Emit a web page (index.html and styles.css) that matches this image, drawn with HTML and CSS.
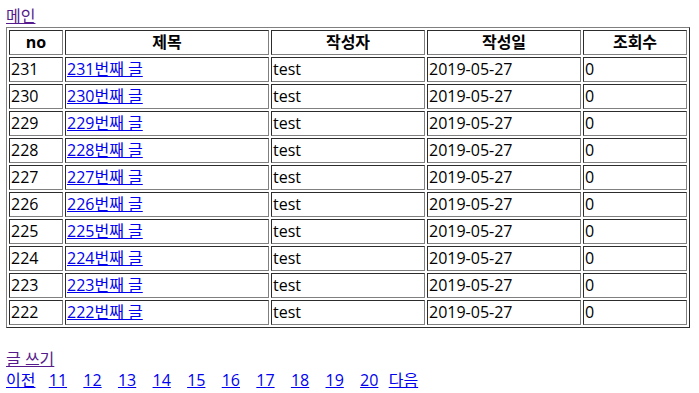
FILE: index.html
```html
<!DOCTYPE html>
<html lang="ko">
<head>
<meta charset="utf-8">
<title>게시판</title>
<link rel="stylesheet" href="styles.css">
</head>
<body>
<div class="top"><a class="visited" href="#">메인</a></div>
<table class="board">
  <thead>
    <tr>
      <th class="c-no">no</th>
      <th class="c-title">제목</th>
      <th class="c-writer">작성자</th>
      <th class="c-date">작성일</th>
      <th class="c-views">조회수</th>
    </tr>
  </thead>
  <tbody>
    <tr><td>231</td><td><a href="#">231번째 글</a></td><td>test</td><td>2019-05-27</td><td>0</td></tr>
    <tr><td>230</td><td><a href="#">230번째 글</a></td><td>test</td><td>2019-05-27</td><td>0</td></tr>
    <tr><td>229</td><td><a href="#">229번째 글</a></td><td>test</td><td>2019-05-27</td><td>0</td></tr>
    <tr><td>228</td><td><a href="#">228번째 글</a></td><td>test</td><td>2019-05-27</td><td>0</td></tr>
    <tr><td>227</td><td><a href="#">227번째 글</a></td><td>test</td><td>2019-05-27</td><td>0</td></tr>
    <tr><td>226</td><td><a href="#">226번째 글</a></td><td>test</td><td>2019-05-27</td><td>0</td></tr>
    <tr><td>225</td><td><a href="#">225번째 글</a></td><td>test</td><td>2019-05-27</td><td>0</td></tr>
    <tr><td>224</td><td><a href="#">224번째 글</a></td><td>test</td><td>2019-05-27</td><td>0</td></tr>
    <tr><td>223</td><td><a href="#">223번째 글</a></td><td>test</td><td>2019-05-27</td><td>0</td></tr>
    <tr><td>222</td><td><a href="#">222번째 글</a></td><td>test</td><td>2019-05-27</td><td>0</td></tr>
  </tbody>
</table>
<div class="write"><a class="visited" href="#">글 쓰기</a></div>
<div class="pager">
  <a class="prev" href="#">이전</a>
  <a href="#">11</a>
  <a href="#">12</a>
  <a href="#">13</a>
  <a href="#">14</a>
  <a href="#">15</a>
  <a href="#">16</a>
  <a href="#">17</a>
  <a href="#">18</a>
  <a href="#">19</a>
  <a href="#">20</a>
  <a class="next" href="#">다음</a>
</div>
</body>
</html>
```
FILE: styles.css
```css
html, body {
  background: #ffffff;
}
body {
  margin: 6px;
  font-family: "Open Sans", "Noto Sans CJK KR", sans-serif;
  font-size: 16px;
  line-height: 21px;
  color: #000000;
}
a {
  color: #0000ee;
  text-decoration: underline;
}
a.visited {
  color: #551a8b;
}
.board {
  border: 1px outset grey;
  border-spacing: 2px;
  border-collapse: separate;
}
.board th,
.board td {
  border: 1px inset grey;
  padding: 1px;
  box-sizing: border-box;
  text-align: left;
  vertical-align: middle;
  white-space: nowrap;
}
.board th {
  text-align: center;
  font-weight: bold;
}
.c-no { width: 54px; }
.c-title { width: 204px; }
.c-writer { width: 154px; }
.c-date { width: 154px; }
.c-views { width: 104px; }
.write {
  margin-top: 21px;
}
.pager {
  display: flex;
  gap: 16.3px;
}
.pager .prev {
  margin-right: -3px;
}
.pager .next {
  margin-left: -6px;
}
```
